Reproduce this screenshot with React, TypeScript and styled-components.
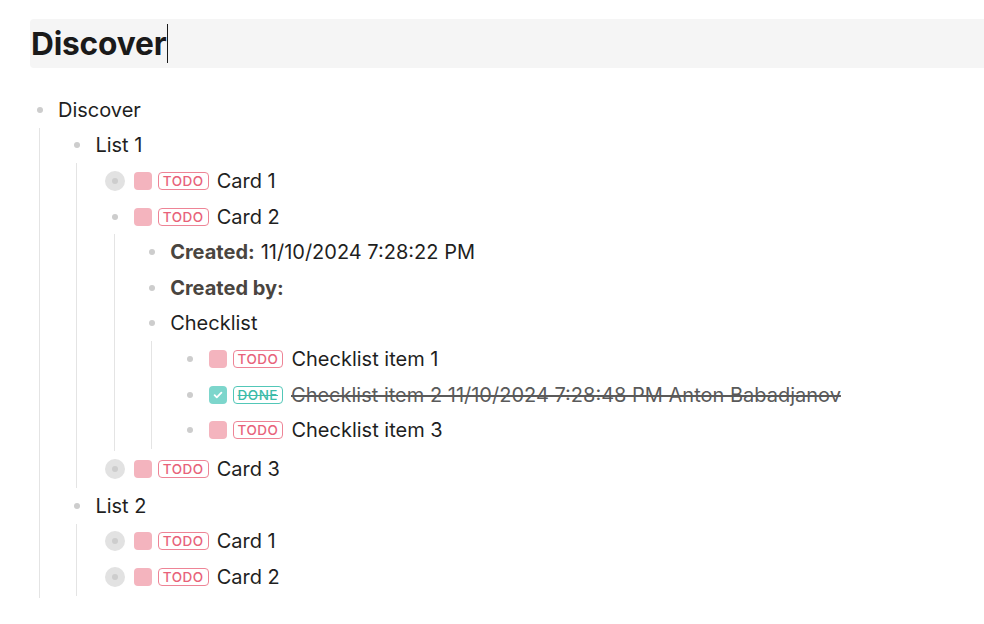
import styled, { createGlobalStyle } from "styled-components";

const GlobalStyle = createGlobalStyle`
    html, body {
        margin: 0;
        padding: 0;
        background: #ffffff;
    }
    body {
        font-family: Inter, "Noto Sans", "Liberation Sans", sans-serif;
        color: #1f1f1f;
        -webkit-font-smoothing: antialiased;
    }
`;

type Marker = "TODO" | "DONE";

interface Node {
    id: string;
    text?: string;
    label?: string;
    marker?: Marker;
    collapsed?: boolean;
    children?: Node[];
}

const tree: Node[] = [
    {
        id: "discover",
        text: "Discover",
        children: [
            {
                id: "list1",
                text: "List 1",
                children: [
                    { id: "l1c1", text: "Card 1", marker: "TODO", collapsed: true },
                    {
                        id: "l1c2",
                        text: "Card 2",
                        marker: "TODO",
                        children: [
                            { id: "created", label: "Created:", text: "11/10/2024 7:28:22 PM" },
                            { id: "createdby", label: "Created by:" },
                            {
                                id: "checklist",
                                text: "Checklist",
                                children: [
                                    { id: "ci1", text: "Checklist item 1", marker: "TODO" },
                                    {
                                        id: "ci2",
                                        text: "Checklist item 2 11/10/2024 7:28:48 PM Anton Babadjanov",
                                        marker: "DONE",
                                    },
                                    { id: "ci3", text: "Checklist item 3", marker: "TODO" },
                                ],
                            },
                        ],
                    },
                    { id: "l1c3", text: "Card 3", marker: "TODO", collapsed: true },
                ],
            },
            {
                id: "list2",
                text: "List 2",
                children: [
                    { id: "l2c1", text: "Card 1", marker: "TODO", collapsed: true },
                    { id: "l2c2", text: "Card 2", marker: "TODO", collapsed: true },
                ],
            },
        ],
    },
];

const Page = styled.div`
    padding: 19px 0 0 30px;
`;

const TitleBox = styled.div`
    display: flex;
    align-items: center;
    height: 49px;
    background: #f5f5f5;
    border-radius: 4px 0 0 4px;
    padding-left: 1px;
    margin-bottom: 24px;
`;

const Title = styled.h1`
    margin: 0;
    font-size: 31.7px;
    font-weight: 700;
    color: #1a1a1a;
    letter-spacing: -0.2px;
`;

const Caret = styled.span`
    display: inline-block;
    width: 1px;
    height: 39px;
    background: #1a1a1a;
    margin-left: 1px;
`;

const Outline = styled.div`
    display: flex;
    flex-direction: column;
`;

const Row = styled.div`
    display: flex;
    align-items: center;
    min-height: 35.6px;
`;

const BulletBox = styled.div<{ $collapsed?: boolean }>`
    width: 20px;
    height: 20px;
    flex-shrink: 0;
    display: flex;
    align-items: center;
    justify-content: center;
    border-radius: 50%;
    background: ${(p) => (p.$collapsed ? "#e2e2e2" : "transparent")};
`;

const Dot = styled.span`
    width: 6px;
    height: 6px;
    border-radius: 50%;
    background: #cdcdcd;
`;

const Content = styled.div<{ $done?: boolean }>`
    display: flex;
    align-items: center;
    margin-left: 8px;
    font-size: 20px;
    line-height: 26px;
    color: ${(p) => (p.$done ? "#5a5a5a" : "#1f1f1f")};
`;

const Checkbox = styled.span<{ $checked?: boolean }>`
    width: 18px;
    height: 18px;
    border-radius: 4px;
    flex-shrink: 0;
    display: flex;
    align-items: center;
    justify-content: center;
    background: ${(p) => (p.$checked ? "#7dd6cc" : "#f4b4be")};
    margin: 0 6px 0 1px;
`;

const Badge = styled.span<{ $done?: boolean }>`
    font-size: 13.5px;
    line-height: 16px;
    font-weight: 500;
    letter-spacing: 0.5px;
    padding: 0 4px;
    border-radius: 4px;
    border: 1px solid ${(p) => (p.$done ? "#52c7b8" : "#ee8496")};
    color: ${(p) => (p.$done ? "#3dbba9" : "#e8627a")};
    text-decoration: ${(p) => (p.$done ? "line-through" : "none")};
    margin-right: 8px;
`;

const Text = styled.span<{ $done?: boolean }>`
    text-decoration: ${(p) => (p.$done ? "line-through" : "none")};
    text-decoration-thickness: 1.5px;
`;

const Label = styled.strong`
    font-weight: 700;
    color: #4a453f;
    margin-right: 6px;
`;

const Children = styled.div`
    margin-left: 9px;
    border-left: 1px solid #e4e4e4;
    padding-left: 27.4px;
    padding-bottom: 1.5px;
`;

const CheckIcon = () => (
    <svg width="12" height="12" viewBox="0 0 12 12" fill="none">
        <path d="M2.6 6.2l2.2 2.2 4.6-4.8" stroke="#fff" strokeWidth="1.8" strokeLinecap="round" strokeLinejoin="round" />
    </svg>
);

const Block = ({ node }: { node: Node }) => {
    const done = node.marker === "DONE";
    return (
        <div>
            <Row>
                <BulletBox $collapsed={node.collapsed}>
                    <Dot />
                </BulletBox>
                <Content $done={done}>
                    {node.marker && (
                        <>
                            <Checkbox $checked={done}>{done && <CheckIcon />}</Checkbox>
                            <Badge $done={done}>{node.marker}</Badge>
                        </>
                    )}
                    {node.label && <Label>{node.label}</Label>}
                    {node.text && <Text $done={done}>{node.text}</Text>}
                </Content>
            </Row>
            {node.children && (
                <Children>
                    {node.children.map((child) => (
                        <Block key={child.id} node={child} />
                    ))}
                </Children>
            )}
        </div>
    );
};

export default function App() {
    return (
        <>
            <GlobalStyle />
            <Page>
                <TitleBox>
                    <Title>Discover</Title>
                    <Caret />
                </TitleBox>
                <Outline>
                    {tree.map((node) => (
                        <Block key={node.id} node={node} />
                    ))}
                </Outline>
            </Page>
        </>
    );
}
